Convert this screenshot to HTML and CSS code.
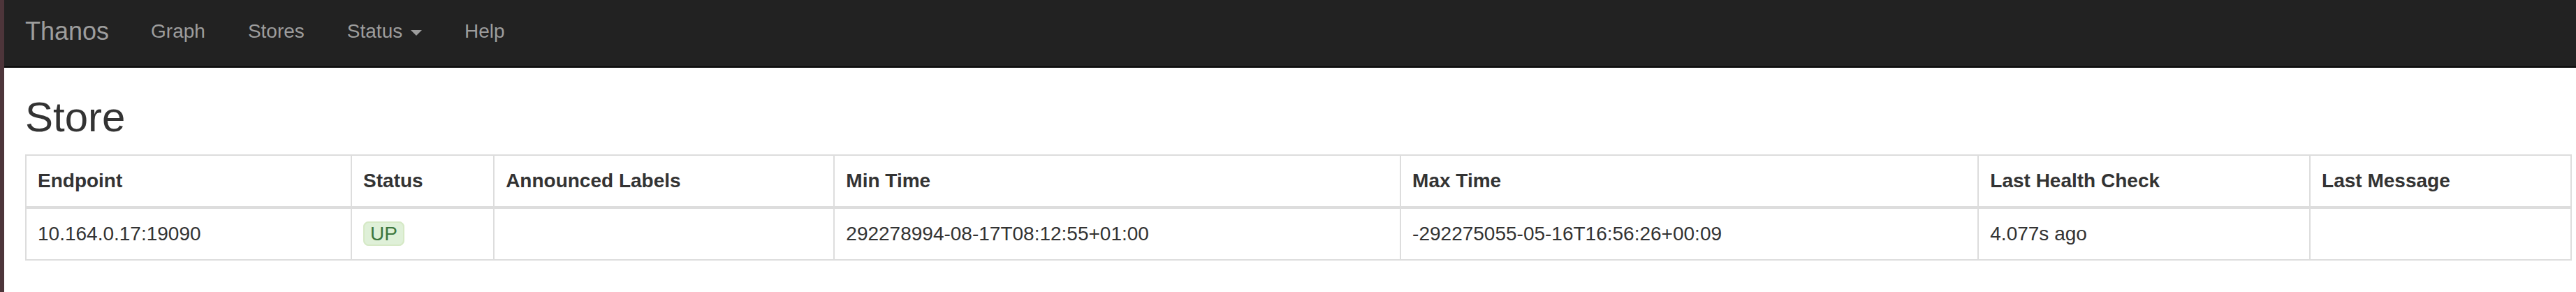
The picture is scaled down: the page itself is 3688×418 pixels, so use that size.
FILE: index.html
```
<!DOCTYPE html>
<html lang="en">
<head>
<meta charset="utf-8">
<title>Thanos</title>
<link rel="stylesheet" href="styles.css">
</head>
<body>
<nav class="navbar">
  <a class="navbar-brand" href="#">Thanos</a>
  <ul class="nav-list">
    <li><a class="nav-link" href="#">Graph</a></li>
    <li><a class="nav-link" href="#">Stores</a></li>
    <li><button class="nav-link" type="button" aria-haspopup="true">Status <span class="caret"></span></button></li>
    <li><a class="nav-link" href="#">Help</a></li>
  </ul>
</nav>
<main class="content">
  <h2 class="title">Store</h2>
  <table class="table">
    <colgroup>
      <col class="col-endpoint">
      <col class="col-status">
      <col class="col-labels">
      <col class="col-min">
      <col class="col-max">
      <col class="col-check">
      <col class="col-message">
    </colgroup>
    <thead>
      <tr>
        <th>Endpoint</th>
        <th>Status</th>
        <th>Announced Labels</th>
        <th>Min Time</th>
        <th>Max Time</th>
        <th>Last Health Check</th>
        <th>Last Message</th>
      </tr>
    </thead>
    <tbody>
      <tr>
        <td>10.164.0.17:19090</td>
        <td><span class="state-up">UP</span></td>
        <td></td>
        <td>292278994-08-17T08:12:55+01:00</td>
        <td>-292275055-05-16T16:56:26+00:09</td>
        <td>4.077s ago</td>
        <td></td>
      </tr>
    </tbody>
  </table>
</main>
</body>
</html>
```

FILE: styles.css
```
* {
  box-sizing: border-box;
}

body {
  margin: 0;
  min-height: 100vh;
  border-left: 6px solid #4d353a;
  background: #fff;
  color: #333;
  font-family: "Liberation Sans", Arial, sans-serif;
  font-size: 28px;
  line-height: 40px;
}

.navbar {
  display: flex;
  background: #222;
  border-bottom: 2px solid #080808;
}

.navbar-brand,
.nav-link {
  display: block;
  padding: 25px 30px 30px;
  color: #9d9d9d;
  line-height: 40px;
  text-decoration: none;
}

.navbar-brand {
  font-size: 36px;
}

.nav-list {
  display: flex;
  gap: 1px;
  margin: 0;
  padding: 0;
  list-style: none;
}

button.nav-link {
  border: 0;
  background: none;
  font: inherit;
  cursor: pointer;
}

.caret {
  display: inline-block;
  margin-left: 4px;
  border-top: 8px solid;
  border-right: 8px solid transparent;
  border-left: 8px solid transparent;
  vertical-align: middle;
}

.content {
  padding: 38px 6px 0 30px;
}

.title {
  margin: 0 0 20px;
  font-size: 60px;
  font-weight: 400;
  line-height: 66px;
}

.table {
  width: 100%;
  border: 2px solid #ddd;
  border-collapse: collapse;
}

.col-endpoint {
  width: 12.79%;
}

.col-status {
  width: 5.6%;
}

.col-labels {
  width: 13.37%;
}

.col-min {
  width: 22.25%;
}

.col-max {
  width: 22.7%;
}

.col-check {
  width: 13.03%;
}

.col-message {
  width: 10.26%;
}

.table th,
.table td {
  padding: 16px;
  border: 2px solid #ddd;
  text-align: left;
  vertical-align: top;
}

.table th {
  border-bottom-width: 4px;
}

.state-up {
  padding: 0 8px;
  border: 2px solid #d6e9c6;
  border-radius: 8px;
  background: #dff0d8;
  color: #3c763d;
}
```
